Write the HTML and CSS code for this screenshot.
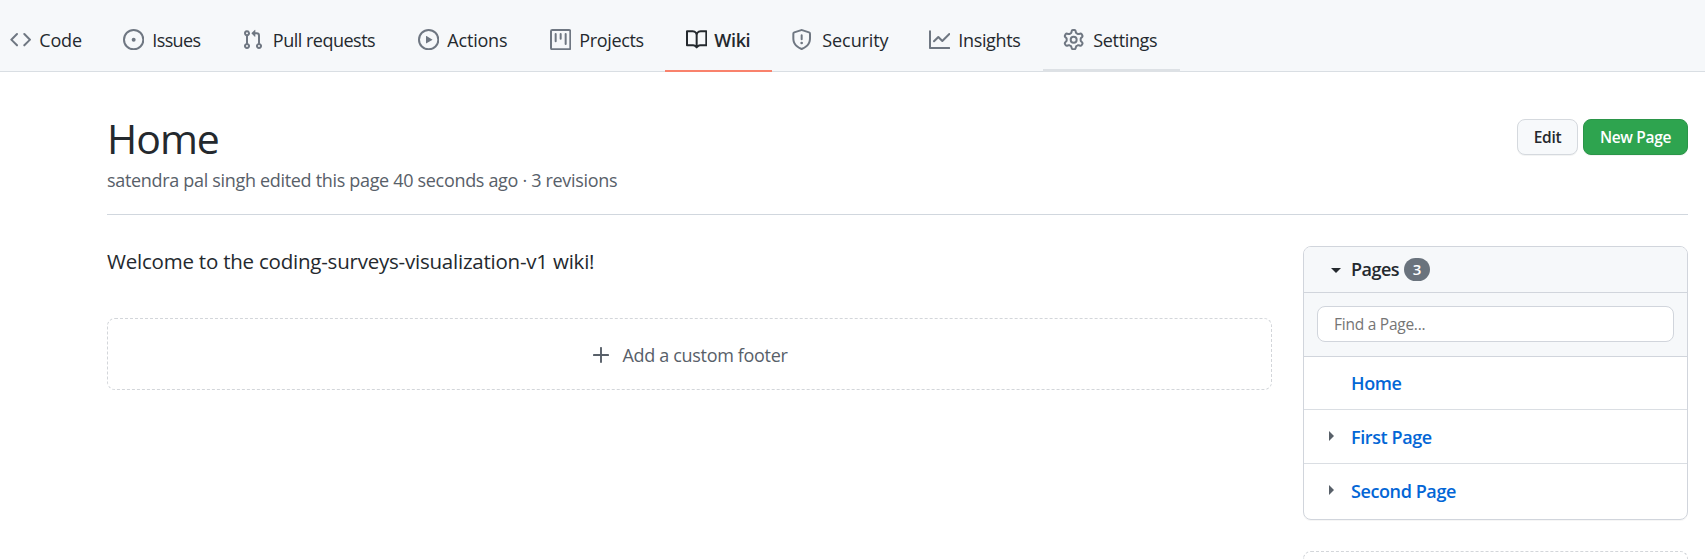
FILE: index.html
```html
<!DOCTYPE html>
<html lang="en">
<head>
<meta charset="utf-8">
<title>Home · Wiki</title>
<link rel="stylesheet" href="styles.css">
</head>
<body>
<nav class="tabs">
  <a class="tab tab-code"><svg class="icon" viewBox="0 0 16 16"><path fill-rule="evenodd" d="M4.72 3.22a.75.75 0 011.06 1.06L2.06 8l3.72 3.72a.75.75 0 11-1.06 1.06L.47 8.53a.75.75 0 010-1.06l4.25-4.25zm6.56 0a.75.75 0 10-1.06 1.06L13.94 8l-3.72 3.72a.75.75 0 101.06 1.06l4.25-4.25a.75.75 0 000-1.06l-4.25-4.25z"/></svg><span class="label">Code</span></a>
  <a class="tab tab-issues"><svg class="icon" viewBox="0 0 16 16"><path d="M8 9.5a1.5 1.5 0 100-3 1.5 1.5 0 000 3z"/><path fill-rule="evenodd" d="M8 0a8 8 0 100 16A8 8 0 008 0zM1.5 8a6.5 6.5 0 1113 0 6.5 6.5 0 01-13 0z"/></svg><span class="label">Issues</span></a>
  <a class="tab tab-pulls"><svg class="icon" viewBox="0 0 16 16"><path fill-rule="evenodd" d="M7.177 3.073L9.573.677A.25.25 0 0110 .854v4.792a.25.25 0 01-.427.177L7.177 3.427a.25.25 0 010-.354zM3.75 2.5a.75.75 0 100 1.5.75.75 0 000-1.5zm-2.25.75a2.25 2.25 0 113 2.122v5.256a2.251 2.251 0 11-1.5 0V5.372A2.25 2.25 0 011.5 3.25zM11 2.5h-1V4h1a1 1 0 011 1v5.628a2.251 2.251 0 101.5 0V5A2.5 2.5 0 0011 2.5zm1 10.25a.75.75 0 111.5 0 .75.75 0 01-1.5 0zM3.75 12a.75.75 0 100 1.5.75.75 0 000-1.5z"/></svg><span class="label">Pull requests</span></a>
  <a class="tab tab-actions"><svg class="icon" viewBox="0 0 16 16"><path fill-rule="evenodd" d="M1.5 8a6.5 6.5 0 1113 0 6.5 6.5 0 01-13 0zM8 0a8 8 0 100 16A8 8 0 008 0zM6.379 5.227A.25.25 0 006 5.442v5.117a.25.25 0 00.379.214l4.264-2.559a.25.25 0 000-.428L6.379 5.227z"/></svg><span class="label">Actions</span></a>
  <a class="tab tab-projects"><svg class="icon" viewBox="0 0 16 16"><path fill-rule="evenodd" d="M1.75 0A1.75 1.75 0 000 1.75v12.5C0 15.216.784 16 1.75 16h12.5A1.75 1.75 0 0016 14.25V1.75A1.75 1.75 0 0014.250 0H1.75zM1.5 1.75a.25.25 0 01.25-.25h12.5a.25.25 0 01.25.25v12.5a.25.25 0 01-.25.25H1.75a.25.25 0 01-.25-.25V1.75zM11.75 3a.75.75 0 00-.75.75v7.5a.75.75 0 001.5 0v-7.5a.75.75 0 00-.75-.75zm-8.25.75a.75.75 0 011.5 0v5.5a.75.75 0 01-1.5 0v-5.5zM8 3a.75.75 0 00-.75.75v3.5a.75.75 0 001.5 0v-3.5A.75.75 0 008 3z"/></svg><span class="label">Projects</span></a>
  <a class="tab tab-wiki selected"><svg class="icon" viewBox="0 0 16 16"><path fill-rule="evenodd" d="M0 1.75A.75.75 0 01.75 1h4.253c1.227 0 2.317.59 3 1.501A3.744 3.744 0 0111.006 1h4.245a.75.75 0 01.75.75v10.5a.75.75 0 01-.75.75h-4.507a2.25 2.25 0 00-1.591.659l-.622.621a.75.75 0 01-1.06 0l-.622-.621A2.25 2.25 0 005.258 13H.75a.75.75 0 01-.75-.75V1.75zm8.755 3a2.25 2.25 0 012.25-2.25H14.5v9h-3.757c-.71 0-1.4.201-1.992.572l.004-7.322zm-1.504 7.324l.004-5.073-.002-2.253A2.25 2.25 0 005.003 2.500H1.5v9h3.757a3.75 3.75 0 011.994.574z"/></svg><span class="label">Wiki</span></a>
  <a class="tab tab-security"><svg class="icon" viewBox="0 0 16 16"><path fill-rule="evenodd" d="M7.467.133a1.75 1.75 0 011.066 0l5.25 1.680A1.75 1.75 0 0115 3.48V7c0 1.566-.32 3.182-1.303 4.682-.983 1.498-2.585 2.813-5.032 3.855a1.7 1.7 0 01-1.33 0c-2.447-1.042-4.049-2.357-5.032-3.855C1.32 10.182 1 8.566 1 7V3.480a1.75 1.75 0 011.217-1.667l5.250-1.680zm.61 1.429a.25.25 0 00-.153 0l-5.250 1.680a.25.25 0 00-.174.238V7c0 1.358.275 2.666 1.057 3.860.784 1.194 2.121 2.340 4.366 3.297a.2.2 0 00.154 0c2.245-.956 3.582-2.104 4.366-3.298C13.225 9.666 13.500 8.360 13.500 7V3.480a.25.25 0 00-.174-.237l-5.250-1.680zM9 10.500a1 1 0 11-2 0 1 1 0 012 0zm-.25-5.750a.75.75 0 10-1.500 0v3a.75.75 0 001.500 0v-3z"/></svg><span class="label">Security</span></a>
  <a class="tab tab-insights"><svg class="icon" viewBox="0 0 16 16"><path fill-rule="evenodd" d="M1.5 1.75a.75.75 0 00-1.5 0v12.5c0 .414.336.75.75.75h14.5a.75.75 0 000-1.5H1.5V1.750zm14.280 2.530a.75.75 0 00-1.060-1.060L10 7.940 7.530 5.470a.75.75 0 00-1.060 0L3.220 8.720a.75.75 0 001.060 1.060L7 7.060l2.470 2.470a.75.75 0 001.060 0l5.250-5.250z"/></svg><span class="label">Insights</span></a>
  <a class="tab tab-settings hovered"><svg class="icon" viewBox="0 0 16 16"><path fill-rule="evenodd" d="M7.429 1.525a6.593 6.593 0 011.142 0c.036.003.108.036.137.146l.289 1.105c.147.56.55.967.997 1.189.174.086.341.183.501.290.417.278.970.423 1.530.270l1.102-.303c.110-.030.175.016.195.046.219.310.410.641.573.989.014.031.022.110-.059.190l-.815.806c-.411.406-.562.957-.530 1.456a4.588 4.588 0 010 .582c-.032.499.119 1.050.530 1.456l.815.806c.080.080.073.159.059.190a6.494 6.494 0 01-.573.990c-.020.029-.086.074-.195.045l-1.103-.303c-.559-.153-1.112-.008-1.529.270-.160.107-.327.204-.500.290-.449.222-.851.628-.998 1.189l-.289 1.105c-.029.110-.101.143-.137.146a6.613 6.613 0 01-1.142 0c-.036-.003-.108-.037-.137-.146l-.289-1.105c-.147-.560-.550-.967-.997-1.189a4.502 4.502 0 01-.501-.290c-.417-.278-.970-.423-1.530-.270l-1.102.303c-.110.030-.175-.016-.195-.046a6.492 6.492 0 01-.573-.989c-.014-.031-.022-.110.059-.190l.815-.806c.411-.406.562-.957.530-1.456a4.587 4.587 0 010-.582c.032-.499-.119-1.050-.530-1.456l-.815-.806c-.080-.080-.073-.159-.059-.190a6.440 6.440 0 01.573-.990c.020-.029.086-.075.195-.045l1.103.303c.559.153 1.112.008 1.529-.270.160-.107.327-.204.500-.290.449-.222.851-.628.998-1.189l.289-1.105c.029-.110.101-.143.137-.146zM8 0c-.236 0-.470.010-.701.030-.743.065-1.290.615-1.458 1.261l-.290 1.106c-.017.066-.078.158-.211.224a5.994 5.994 0 00-.668.386c-.123.082-.233.090-.300.071L3.270 2.776c-.644-.177-1.392.020-1.820.630a7.977 7.977 0 00-.704 1.217c-.315.675-.111 1.422.363 1.891l.815.806c.050.048.098.147.088.294a6.084 6.084 0 000 .772c.010.147-.038.246-.088.294l-.815.806c-.474.469-.678 1.216-.363 1.891.200.428.436.835.704 1.218.428.609 1.176.806 1.820.630l1.103-.303c.066-.019.176-.011.299.071.213.143.436.272.668.386.133.066.194.158.212.224l.289 1.106c.169.646.715 1.196 1.458 1.260a8.094 8.094 0 001.402 0c.743-.064 1.290-.614 1.458-1.260l.290-1.106c.017-.066.078-.158.211-.224a5.980 5.980 0 00.668-.386c.123-.082.233-.090.300-.071l1.102.302c.644.177 1.392-.020 1.820-.630.268-.382.505-.789.704-1.217.315-.675.111-1.422-.364-1.891l-.814-.806c-.050-.048-.098-.147-.088-.294a6.100 6.100 0 000-.772c-.010-.147.039-.246.088-.294l.814-.806c.475-.469.679-1.216.364-1.891a7.992 7.992 0 00-.704-1.218c-.428-.609-1.176-.806-1.820-.630l-1.103.303c-.066.019-.176.011-.299-.071a5.991 5.991 0 00-.668-.386c-.133-.066-.194-.158-.212-.224L10.160 1.290C9.990.645 9.444.095 8.701.031A8.094 8.094 0 008 0zm1.500 8a1.500 1.500 0 11-3 0 1.500 1.500 0 013 0zM11 8a3 3 0 11-6 0 3 3 0 016 0z"/></svg><span class="label">Settings</span></a>
</nav>
<main class="page">
  <header class="page-head">
    <div>
      <h1 class="title">Home</h1>
      <p class="subtitle">satendra pal singh edited this page 40 seconds ago · 3 revisions</p>
    </div>
    <div class="actions">
      <button class="btn btn-edit">Edit</button>
      <button class="btn btn-primary">New Page</button>
    </div>
  </header>
  <div class="columns">
    <section class="content">
      <p class="welcome">Welcome to the coding-surveys-visualization-v1 wiki!</p>
      <a class="add-box"><svg class="plus" viewBox="0 0 16 16"><path d="M8 .9v14.200M.9 8h14.200"/></svg><span class="add-label">Add a custom footer</span></a>
    </section>
    <aside class="sidebar">
      <div class="pages">
        <div class="pages-head"><svg class="caret-down" viewBox="0 0 10 5"><path d="M0 0h10L5 5z"/></svg><span class="pages-title">Pages</span><span class="counter">3</span></div>
        <div class="search"><input class="find" type="text" placeholder="Find a Page..."></div>
        <div class="row row-home"><span class="link">Home</span></div>
        <div class="row"><svg class="caret-right" viewBox="0 0 5 10"><path d="M0 0v10l5-5z"/></svg><span class="link">First Page</span></div>
        <div class="row row-last"><svg class="caret-right" viewBox="0 0 5 10"><path d="M0 0v10l5-5z"/></svg><span class="link">Second Page</span></div>
      </div>
      <div class="add-sidebar"></div>
    </aside>
  </div>
</main>
</body>
</html>
```
FILE: styles.css
```css
* { box-sizing: border-box; }
body {
  margin: 0;
  background: #fff;
  color: #24292e;
  font: 18px/24px "Open Sans", "Noto Sans", sans-serif;
}
h1, p { margin: 0; font-weight: 400; }
.tabs {
  display: grid;
  grid-template-columns: 102px 118.5px 176.5px 132px 136px 105px 137px 136px 137px;
  height: 72px;
  background: linear-gradient(#d9dee3, #d9dee3) 0 71px / 100% 1px no-repeat, #f6f8fa;
}
.tab {
  display: flex;
  align-items: center;
  height: 72px;
  padding: 9px 0 0 21px;
  border-bottom: 2px solid transparent;
}
.tab-code { padding-left: 10px; }
.icon { width: 21.33px; height: 21.33px; margin-right: 8px; fill: #6f7782; flex: none; }
.label { white-space: nowrap; padding-top: 1px; letter-spacing: -.35px; }
.tab-code .label, .tab-actions .label { letter-spacing: -.2px; }
.tab-issues .label { letter-spacing: -.65px; }
.tab-pulls .label { padding-left: 2px; letter-spacing: -.5px; }
.tab-security .label { padding-left: 2px; letter-spacing: -.1px; }
.tab-insights { padding-left: 22px; }
.tab-settings { padding-left: 20px; }
.tab-settings .label { padding-left: 1px; }
.selected { width: 107px; border-color: #f9826c; font-weight: 600; }
.selected .icon { margin-right: 7px; fill: #24292e; }
.hovered { padding-top: 10px; border-bottom: 3px solid #dde1e5; }
.page { padding: 47px 17px 0 107px; }
.page-head { display: flex; justify-content: space-between; height: 96px; border-bottom: 1px solid #d1d7de; }
.title { margin-top: -1px; font-size: 41px; line-height: 40px; letter-spacing: -1px; }
.subtitle { margin-top: 10px; color: #586069; letter-spacing: -.32px; }
.actions { display: flex; gap: 5px; }
.btn {
  height: 36px;
  padding: 0 0 1px;
  border: 1px solid #d5d9de;
  border-radius: 8px;
  background: #f7f9fb;
  color: #24292e;
  font: 600 15.5px/20px "Open Sans", "Noto Sans", sans-serif;
  letter-spacing: -.35px;
  box-shadow: 0 1px 0 rgba(27, 31, 35, .05);
}
.btn-edit { width: 61px; }
.btn-primary { width: 105px; background: #2ea44f; border-color: #2b9549; color: #fff; }
.columns { display: flex; justify-content: space-between; padding-top: 31px; }
.content { width: 1165px; }
.welcome { margin-top: -1px; font-size: 20.5px; line-height: 32px; letter-spacing: -.22px; }
.add-box {
  display: flex;
  align-items: center;
  justify-content: center;
  height: 72px;
  margin-top: 41px;
  padding-left: 2px;
  border: 1px dashed #d3d6da;
  border-radius: 8px;
  color: #586069;
}
.plus { width: 16px; height: 16px; margin: 2px 13px 0 0; fill: none; stroke: #586069; stroke-width: 1.9; stroke-linecap: round; }
.add-label { margin-top: 1px; letter-spacing: -.32px; }
.sidebar { width: 385px; }
.pages { height: 274px; border: 1px solid #d1d5dc; border-radius: 8px; overflow: hidden; box-shadow: 0 1px 0 rgba(27, 31, 35, .04); }
.pages-head { display: flex; align-items: center; height: 46px; padding: 0 0 1px 27px; background: #f6f8fa; border-bottom: 1px solid #d1d5dc; font-weight: 600; }
.caret-down { width: 10px; height: 5px; margin: 3px 10px 0 0; fill: #24292e; }
.pages-title { letter-spacing: -.5px; }
.counter {
  width: 26px;
  height: 23px;
  margin-left: 5px;
  border-radius: 12px;
  background: #6a737d;
  color: #fff;
  font-size: 15px;
  line-height: 23px;
  text-align: center;
}
.search { height: 64px; padding: 13px; background: #f6f8fa; border-bottom: 1px solid #d1d5dc; }
.find {
  display: block;
  width: 357px;
  height: 36px;
  padding: 0 16px;
  border: 1px solid #d1d5dc;
  border-radius: 8px;
  background: #fff;
  font: 15.5px/20px "Open Sans", "Noto Sans", sans-serif;
  letter-spacing: -.25px;
}
.find::placeholder { color: #757575; opacity: 1; }
.row { display: flex; align-items: center; height: 54px; padding-left: 25px; border-bottom: 1px solid #dadee3; color: #0366d6; font-weight: 600; letter-spacing: -.4px; }
.row-home { height: 53px; padding-left: 47px; }
.row-last { border: 0; }
.caret-right { width: 5px; height: 10px; margin: 0 17px 2px 0; fill: #586069; }
.add-sidebar { height: 8px; margin-top: 31px; border: 1px dashed #d3d6da; border-bottom: 0; border-radius: 8px 8px 0 0; }
```
